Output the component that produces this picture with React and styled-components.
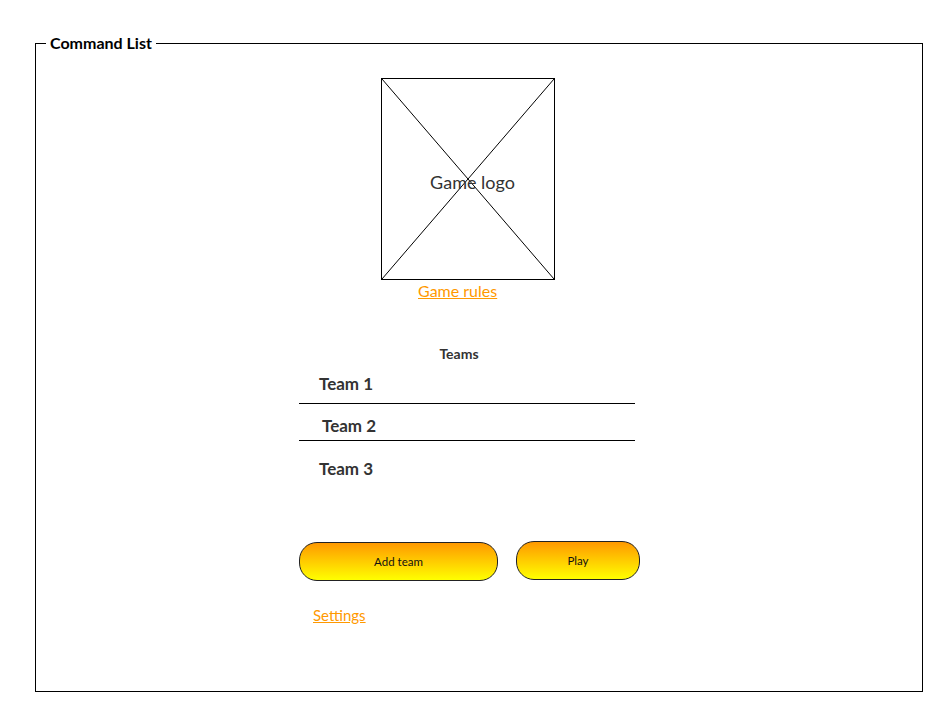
import React from 'react';
import styled, { createGlobalStyle } from 'styled-components';

const ORANGE = '#ff9900';
const FONT = `Lato, "Open Sans", sans-serif`;

const GlobalStyle = createGlobalStyle`
  body {
    margin: 0;
    background: #fff;
    font-family: ${FONT};
  }
`;

const Page = styled.div`
  padding: 34px 21px 20px 35px;
`;

const Frame = styled.fieldset`
  margin: 0;
  padding: 0;
  border: 1px solid #000;
  height: 658px;
  box-sizing: border-box;
  min-width: 0;
`;

const Legend = styled.legend`
  margin-left: 10px;
  padding: 0 4px;
  font-family: ${FONT};
  font-weight: 700;
  font-size: 16px;
  color: #000;
  line-height: 18px;
`;

const Column = styled.div`
  margin-left: 263px;
  width: 341px;
  padding-top: 26px;
  display: flex;
  flex-direction: column;
`;

const LogoBox = styled.div`
  position: relative;
  align-self: center;
  margin-left: -3px;
  width: 174px;
  height: 202px;
  box-sizing: border-box;
  border: 1px solid #000;
  display: flex;
  align-items: center;
  justify-content: center;
  padding: 6px 0 0 9px;
  font-size: 18px;
  color: #333;
`;

const Cross = styled.svg`
  position: absolute;
  inset: 0;
  width: 100%;
  height: 100%;
`;

const LogoLabel = styled.span`
  position: relative;
`;

const TextLink = styled.a`
  color: ${ORANGE};
  text-decoration: underline;
  font-size: ${(p) => p.$size}px;
  margin-left: ${(p) => p.$indent}px;
  margin-top: ${(p) => p.$top}px;
  line-height: 20px;
  align-self: flex-start;
  cursor: pointer;
`;

const TeamsTitle = styled.div`
  margin-top: 44px;
  width: 336px;
  padding-right: 16px;
  box-sizing: border-box;
  text-align: center;
  font-weight: 700;
  font-size: 14px;
  color: #333;
  line-height: 18px;
`;

const TeamList = styled.ul`
  list-style: none;
  margin: 0;
  padding: 0;
  width: 336px;
`;

const TeamRow = styled.li`
  display: flex;
  align-items: center;
  box-sizing: border-box;
  height: ${(p) => p.$h}px;
  padding-left: ${(p) => p.$indent}px;
  padding-top: ${(p) => p.$top}px;
  border-bottom: ${(p) => (p.$line ? '1px solid #000' : 'none')};
  font-weight: 700;
  font-size: 17px;
  color: #333;
`;

const Actions = styled.div`
  margin-top: 46px;
  display: flex;
  align-items: flex-start;
  gap: 18px;
`;

const PillButton = styled.button`
  width: ${(p) => p.$w}px;
  height: 39px;
  margin-top: ${(p) => p.$top || 0}px;
  border: 1px solid #222;
  border-radius: 18px;
  background: linear-gradient(to bottom, #ff9900, #ffff00);
  font-family: ${FONT};
  font-size: 11.5px;
  color: #111;
  padding: 0;
  cursor: pointer;
`;

// row heights / nudges taken from the mockup
const teams = [
  { name: 'Team 1', h: 41, indent: 20, line: true, top: 1 },
  { name: 'Team 2', h: 37, indent: 23, line: true, top: 6 },
  { name: 'Team 3', h: 54, indent: 20, line: false, top: 0 },
];

const App = () => (
  <>
    <GlobalStyle />
    <Page>
      <Frame>
        <Legend>Command List</Legend>
        <Column>
          <LogoBox>
            <Cross viewBox="0 0 100 100" preserveAspectRatio="none">
              <line x1="0" y1="0" x2="100" y2="100" stroke="#000" strokeWidth="1" vectorEffect="non-scaling-stroke" />
              <line x1="100" y1="0" x2="0" y2="100" stroke="#000" strokeWidth="1" vectorEffect="non-scaling-stroke" />
            </Cross>
            <LogoLabel>Game logo</LogoLabel>
          </LogoBox>
          <TextLink $size={16} $indent={119} $top={1}>Game rules</TextLink>
          <TeamsTitle>Teams</TeamsTitle>
          <TeamList>
            {teams.map((t) => (
              <TeamRow key={t.name} $h={t.h} $indent={t.indent} $line={t.line} $top={t.top}>
                {t.name}
              </TeamRow>
            ))}
          </TeamList>
          <Actions>
            <PillButton $w={199} $top={1}>Add team</PillButton>
            <PillButton $w={124}>Play</PillButton>
          </Actions>
          <TextLink $size={15} $indent={14} $top={24}>Settings</TextLink>
        </Column>
      </Frame>
    </Page>
  </>
);

export default App;
